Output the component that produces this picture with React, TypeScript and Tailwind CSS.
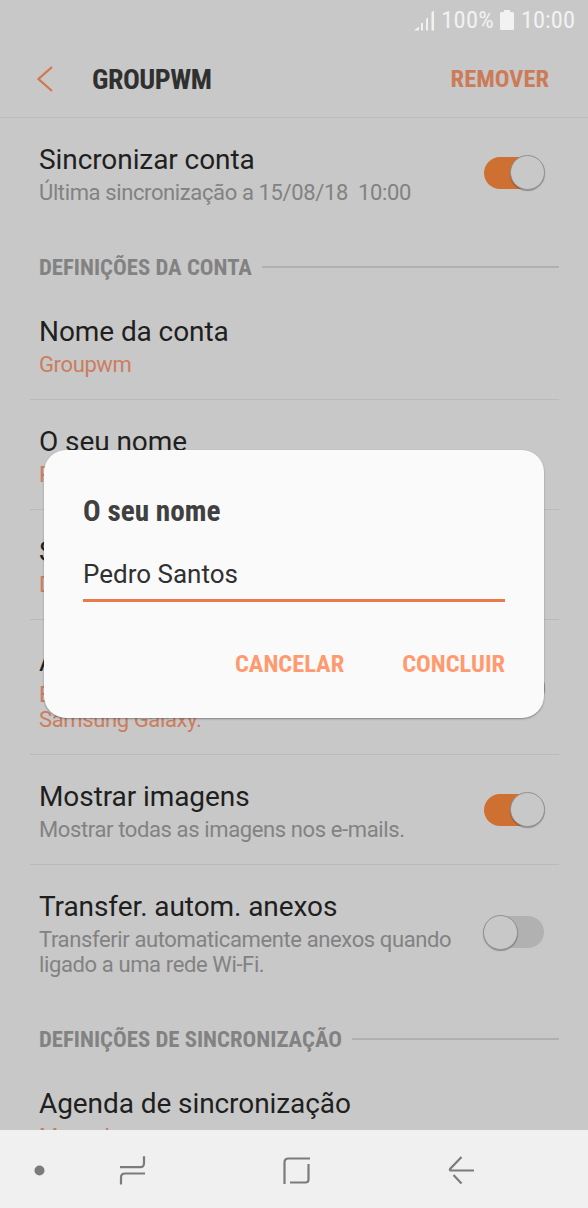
import React, { useState } from 'react';
import clsx from 'clsx';

type SettingItem = {
  title: string;
  summary: string;
  accent?: boolean;
  checked?: boolean;
  last?: boolean;
};

const accountItems: SettingItem[] = [
  { title: 'Nome da conta', summary: 'Groupwm', accent: true },
  { title: 'O seu nome', summary: 'Pedro Santos', accent: true },
  { title: 'Sempre Cc/Bcc para mim', summary: 'Desligado', accent: true },
  {
    title: 'Assinatura',
    summary: 'Enviado do meu smartphone\nSamsung Galaxy.',
    accent: true,
    checked: true,
  },
  { title: 'Mostrar imagens', summary: 'Mostrar todas as imagens nos e-mails.', checked: true },
  {
    title: 'Transfer. autom. anexos',
    summary: 'Transferir automaticamente anexos quando\nligado a uma rede Wi-Fi.',
    checked: false,
    last: true,
  },
];

const Switch = ({ initial }: { initial: boolean }) => {
  const [on, setOn] = useState<boolean>(initial);

  return (
    <button
      role="switch"
      aria-checked={on}
      onClick={() => setOn(!on)}
      className={clsx(
        'mr-[15px] flex h-8 w-[60px] shrink-0 items-center rounded-full',
        on ? 'justify-end bg-[#ce7032]' : 'justify-start bg-[#b1b1b1]'
      )}
    >
      <span
        className={clsx(
          'h-[35px] w-[35px] shrink-0 rounded-full border border-[#929292] bg-[#c8c8c8] shadow-[0_1px_1px_rgba(0,0,0,0.3)]',
          on ? '-mr-px' : '-ml-px'
        )}
      />
    </button>
  );
};

const SettingRow = ({ title, summary, accent, checked, last }: SettingItem) => (
  <div
    className={clsx(
      'ml-[30px] mr-[29px] flex shrink-0 items-center justify-between border-b pl-[9px]',
      last ? 'border-transparent' : 'border-[#bababa]'
    )}
  >
    <div className="pb-[22px] pt-[22px]">
      <h2 className="text-[28px] leading-[39px] tracking-[-0.08px] text-[#1f1f1f]">{title}</h2>
      <p
        className={clsx(
          'mt-px whitespace-pre text-[22px] leading-[25px] tracking-[-0.38px]',
          accent ? 'text-[#cb7d5f]' : 'text-[#828282]'
        )}
      >
        {summary}
      </p>
    </div>
    {checked !== undefined && <Switch initial={checked} />}
  </div>
);

const SectionHeader = ({ label }: { label: string }) => (
  <div className="flex h-[62px] shrink-0 items-center pl-[39px] pr-[29px] pt-4">
    <h3 className="pt-[2px] font-['Roboto_Condensed',Roboto,sans-serif] text-[22.75px] font-bold text-[#828282] [font-stretch:75%]">
      {label}
    </h3>
    <div role="separator" className="ml-[10px] h-[2px] flex-1 bg-[#b0b0b0]" />
  </div>
);

// Signal, battery and clock
const StatusBar = () => (
  <div className="flex h-10 shrink-0 items-center justify-end pr-[13px] font-['Roboto_Condensed',Roboto,sans-serif] text-[24.5px] text-[#f2f2f2] [font-stretch:75%]">
    <svg width="21" height="21" viewBox="0 0 21 21" fill="currentColor">
      <path d="M0 20.500 5 16.500V20.500ZM7 13.500 9 12.500V20.500H7ZM12 9 14 7.500V20.500H12ZM17.500 2.500 20 .5V20.500H17.500Z" />
    </svg>
    <span className="ml-[6px] tracking-[0.2px]">100%</span>
    <svg width="14" height="20" viewBox="0 0 14 20" fill="currentColor" className="ml-[6px]">
      <path d="M4 0h6v2h2.500Q14 2 14 3.500V18.500Q14 20 12.500 20H1.500Q0 20 0 18.500V3.500Q0 2 1.500 2H4Z" />
    </svg>
    <span className="ml-[7px]">10:00</span>
  </div>
);

const NavigationBar = () => (
  <nav className="h-[78px] shrink-0 bg-[#f0f0f0] text-[#7b7b7b]">
    <svg width="588" height="78" viewBox="0 0 588 78" fill="none" stroke="currentColor" strokeWidth="2.2">
      <circle cx="39.500" cy="40.500" r="5" fill="currentColor" stroke="none" />
      <path d="M120 37.200h20q4 0 4-4v-7M145 43.500h-20q-4 0-4 4v7" />
      <path d="M284.500 54V32.500q0-4 4-4H310M308.500 34v15.500q0 3-3 3H290" />
      <path d="M474 40.500H451q-2 0-.5-2L461.500 27M453.500 45l8 8.500" />
    </svg>
  </nav>
);

const NameDialog = () => {
  const [name, setName] = useState<string>('Pedro Santos');

  return (
    <div
      role="dialog"
      className="absolute left-11 top-[450px] flex h-[268px] w-[500px] flex-col rounded-[22px] bg-[#fafafa] px-[39px] shadow-[0_1px_2px_rgba(0,0,0,0.35)]"
    >
      <h2 className="mt-[42px] font-['Roboto_Condensed',Roboto,sans-serif] text-[29.25px] font-bold leading-[38px] text-[#404040] [font-stretch:75%]">
        O seu nome
      </h2>
      <input
        value={name}
        onChange={(e) => setName(e.target.value)}
        className="mt-5 h-[52px] w-full border-b-[3px] border-[#e87a4c] pb-px text-[26px] text-[#303030] outline-none"
      />
      <div className="mt-[44px] flex justify-end gap-[58px] font-['Roboto_Condensed',Roboto,sans-serif] text-[24.4px] font-bold leading-9 text-[#ff9a70] [font-stretch:75%]">
        <button>CANCELAR</button>
        <button>CONCLUIR</button>
      </div>
    </div>
  );
};

const App = () => {
  return (
    <div className="relative flex h-[1208px] w-[588px] flex-col overflow-hidden bg-[#c8c8c8] font-[Roboto,sans-serif]">
      <StatusBar />

      {/* Header */}
      <header className="flex h-[78px] shrink-0 items-center border-b border-[#bcbcbc] pl-[37px] pr-[39px] font-['Roboto_Condensed',Roboto,sans-serif] font-bold [font-stretch:75%]">
        <svg width="16" height="26" viewBox="0 0 16 26" fill="none" stroke="#d27850" strokeWidth="2.3">
          <path d="M15 1 1.500 13 15 25" />
        </svg>
        <h1 className="ml-[39px] pt-[2px] text-[28px] tracking-[-0.5px] text-[#303030]">GROUPWM</h1>
        <button className="ml-auto pt-[2px] text-[24.5px] text-[#cc7b59]">REMOVER</button>
      </header>

      {/* Settings */}
      <main className="flex min-h-0 flex-1 flex-col overflow-hidden">
        <SettingRow
          title="Sincronizar conta"
          summary="Última sincronização a 15/08/18  10:00"
          checked={true}
          last
        />
        <SectionHeader label="DEFINIÇÕES DA CONTA" />
        {accountItems.map((item) => (
          <SettingRow key={item.title} {...item} />
        ))}
        <SectionHeader label="DEFINIÇÕES DE SINCRONIZAÇÃO" />
        <SettingRow title="Agenda de sincronização" summary="Manual" accent />
      </main>

      <NavigationBar />
      <NameDialog />
    </div>
  );
};

export default App;
